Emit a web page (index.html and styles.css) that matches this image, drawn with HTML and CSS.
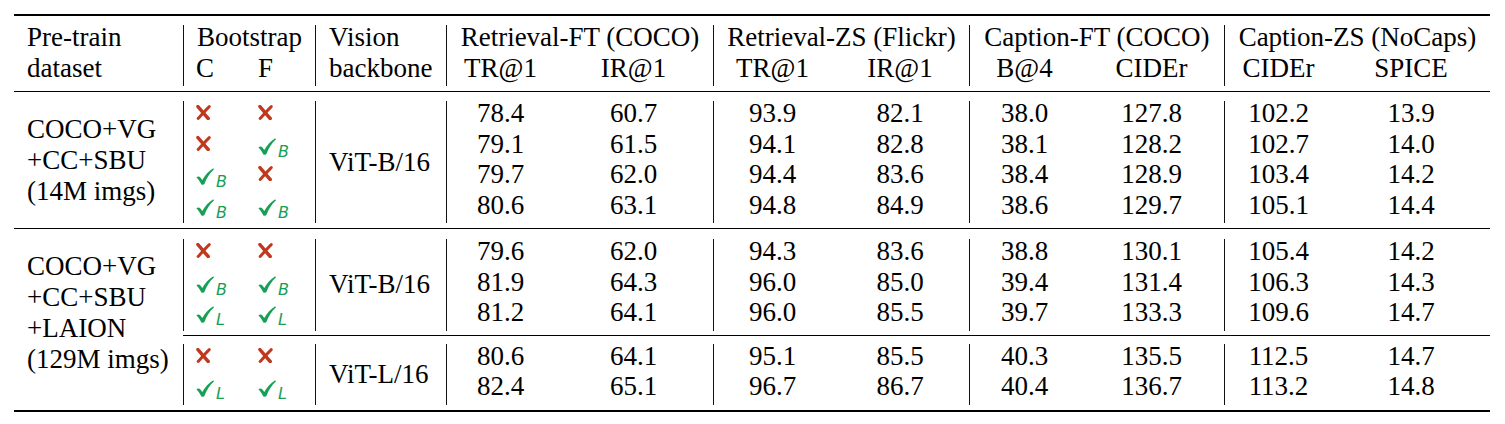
FILE: index.html
```html
<!DOCTYPE html>
<html lang="en">
<head>
<meta charset="utf-8">
<title>Bootstrap ablation table</title>
<link rel="stylesheet" href="styles.css">
</head>
<body>
<svg class="defs" aria-hidden="true">
  <symbol id="x" viewBox="0 0 14 14">
    <path d="M1.8 1.5 C4.6 4.6 7.6 8.4 11.4 12.6" fill="none" stroke="currentColor" stroke-width="3.2" stroke-linecap="round"/>
    <path d="M12.4 1.5 C9 4.8 5.6 8.6 2 12.6" fill="none" stroke="currentColor" stroke-width="2.7" stroke-linecap="round"/>
  </symbol>
  <symbol id="ck" viewBox="0 0 18 17">
    <path d="M0.4 9.4 C1.8 8 3.4 8.3 4.6 9.8 L6.3 12 C8.8 7.4 12.4 3.2 17.3 0.2 L17.9 1.4 C13.9 4.8 10.8 9.6 8.4 16 C7.8 17 5.9 17.1 5.2 16.2 C3.9 13.4 2.3 11 0.4 9.4 Z" fill="currentColor"/>
  </symbol>
</svg>

<div class="tbl">
  <div class="rule thick"></div>

  <div class="head">
    <div class="ds"><div class="ln">Pre-train</div><div class="ln">dataset</div></div>
    <div class="grid">
      <div class="span2 vl">Bootstrap</div>
      <div class="vis vl">Vision</div>
      <div class="span2 vl">Retrieval-FT (COCO)</div>
      <div class="span2 vl">Retrieval-ZS (Flickr)</div>
      <div class="span2 vl">Caption-FT (COCO)</div>
      <div class="span2 vl">Caption-ZS (NoCaps)</div>

      <div class="mk vl">C</div>
      <div class="mk">F</div>
      <div class="vis vl">backbone</div>
      <div class="n vl">TR@1</div>
      <div class="n">IR@1</div>
      <div class="n vl">TR@1</div>
      <div class="n">IR@1</div>
      <div class="n vl">B@4</div>
      <div class="n">CIDEr</div>
      <div class="n vl">CIDEr</div>
      <div class="n">SPICE</div>
    </div>
  </div>

  <div class="rule"></div>

  <div class="group">
    <div class="ds"><div>COCO+VG</div><div>+CC+SBU</div><div>(14M imgs)</div></div>
    <div class="subs">
      <div class="sub s1">
        <div class="grid">
          <div class="mk vl"><svg class="xm"><use href="#x"/></svg></div>
          <div class="mk"><svg class="xm"><use href="#x"/></svg></div>
          <div class="vis vl bb4">ViT-B/16</div>
          <div class="n vl">78.4</div><div class="n">60.7</div>
          <div class="n vl">93.9</div><div class="n">82.1</div>
          <div class="n vl">38.0</div><div class="n">127.8</div>
          <div class="n vl">102.2</div><div class="n">13.9</div>

          <div class="mk vl"><svg class="xm"><use href="#x"/></svg></div>
          <div class="mk"><svg class="cm"><use href="#ck"/></svg><i class="sb">B</i></div>
          <div class="n vl">79.1</div><div class="n">61.5</div>
          <div class="n vl">94.1</div><div class="n">82.8</div>
          <div class="n vl">38.1</div><div class="n">128.2</div>
          <div class="n vl">102.7</div><div class="n">14.0</div>

          <div class="mk vl"><svg class="cm"><use href="#ck"/></svg><i class="sb">B</i></div>
          <div class="mk"><svg class="xm"><use href="#x"/></svg></div>
          <div class="n vl">79.7</div><div class="n">62.0</div>
          <div class="n vl">94.4</div><div class="n">83.6</div>
          <div class="n vl">38.4</div><div class="n">128.9</div>
          <div class="n vl">103.4</div><div class="n">14.2</div>

          <div class="mk vl"><svg class="cm"><use href="#ck"/></svg><i class="sb">B</i></div>
          <div class="mk"><svg class="cm"><use href="#ck"/></svg><i class="sb">B</i></div>
          <div class="n vl">80.6</div><div class="n">63.1</div>
          <div class="n vl">94.8</div><div class="n">84.9</div>
          <div class="n vl">38.6</div><div class="n">129.7</div>
          <div class="n vl">105.1</div><div class="n">14.4</div>
        </div>
      </div>
    </div>
  </div>

  <div class="rule"></div>

  <div class="group g2">
    <div class="ds"><div>COCO+VG</div><div>+CC+SBU</div><div>+LAION</div><div>(129M imgs)</div></div>
    <div class="subs">
      <div class="sub s2a">
        <div class="grid">
          <div class="mk vl"><svg class="xm"><use href="#x"/></svg></div>
          <div class="mk"><svg class="xm"><use href="#x"/></svg></div>
          <div class="vis vl bb3">ViT-B/16</div>
          <div class="n vl">79.6</div><div class="n">62.0</div>
          <div class="n vl">94.3</div><div class="n">83.6</div>
          <div class="n vl">38.8</div><div class="n">130.1</div>
          <div class="n vl">105.4</div><div class="n">14.2</div>

          <div class="mk vl"><svg class="cm"><use href="#ck"/></svg><i class="sb">B</i></div>
          <div class="mk"><svg class="cm"><use href="#ck"/></svg><i class="sb">B</i></div>
          <div class="n vl">81.9</div><div class="n">64.3</div>
          <div class="n vl">96.0</div><div class="n">85.0</div>
          <div class="n vl">39.4</div><div class="n">131.4</div>
          <div class="n vl">106.3</div><div class="n">14.3</div>

          <div class="mk vl"><svg class="cm"><use href="#ck"/></svg><i class="sb">L</i></div>
          <div class="mk"><svg class="cm"><use href="#ck"/></svg><i class="sb">L</i></div>
          <div class="n vl">81.2</div><div class="n">64.1</div>
          <div class="n vl">96.0</div><div class="n">85.5</div>
          <div class="n vl">39.7</div><div class="n">133.3</div>
          <div class="n vl">109.6</div><div class="n">14.7</div>
        </div>
      </div>
      <div class="rule"></div>
      <div class="sub s2b">
        <div class="grid">
          <div class="mk vl"><svg class="xm"><use href="#x"/></svg></div>
          <div class="mk"><svg class="xm"><use href="#x"/></svg></div>
          <div class="vis vl bb2">ViT-L/16</div>
          <div class="n vl">80.6</div><div class="n">64.1</div>
          <div class="n vl">95.1</div><div class="n">85.5</div>
          <div class="n vl">40.3</div><div class="n">135.5</div>
          <div class="n vl">112.5</div><div class="n">14.7</div>

          <div class="mk vl"><svg class="cm"><use href="#ck"/></svg><i class="sb">L</i></div>
          <div class="mk"><svg class="cm"><use href="#ck"/></svg><i class="sb">L</i></div>
          <div class="n vl">82.4</div><div class="n">65.1</div>
          <div class="n vl">96.7</div><div class="n">86.7</div>
          <div class="n vl">40.4</div><div class="n">136.7</div>
          <div class="n vl">113.2</div><div class="n">14.8</div>
        </div>
      </div>
    </div>
  </div>

  <div class="rule thick"></div>
</div>
</body>
</html>
```

FILE: styles.css
```css
html, body {
  margin: 0;
  background: #ffffff;
}

body {
  font-family: "Liberation Serif", "Times New Roman", serif;
  font-size: 27px;
  color: #000;
}

.defs {
  position: absolute;
  width: 0;
  height: 0;
  overflow: hidden;
}

.tbl {
  width: 1476px;
  margin: 14px 0 0 14px;
}

.rule {
  height: 1px;
  background: #000;
}

.rule.thick {
  height: 2px;
}

.head {
  display: flex;
  padding: 9px 0 5px;
}

.ds {
  flex: 0 0 169px;
  box-sizing: border-box;
  padding-left: 13px;
  white-space: nowrap;
}

.head .ds .ln {
  line-height: 24.5px;
  padding-bottom: 6px;
}

.group {
  display: flex;
}

.group .ds {
  display: flex;
  flex-direction: column;
  justify-content: center;
  line-height: 31px;
}

.group.g2 .ds {
  padding-bottom: 13px;
}

.subs {
  flex: 1;
}

.sub.s1 {
  padding: 9px 0 5px;
}

.sub.s2a {
  padding: 10px 0 4px;
}

.sub.s2b {
  padding: 8px 0 5px;
}

.grid {
  display: grid;
  grid-template-columns: 62px 70px 131px 108px 159px 118px 138px 110px 145px 108px 158px;
}

.grid > div {
  line-height: 24.5px;
  padding-bottom: 6px;
  white-space: nowrap;
}

.vl {
  border-left: 1px solid #111;
}

.mk {
  padding-left: 13px;
}

.mk.vl {
  padding-left: 12px;
}

.vis {
  padding-left: 13px;
}

.n {
  text-align: center;
}

.span2 {
  grid-column: span 2;
  text-align: center;
}

.grid > .bb4,
.grid > .bb3,
.grid > .bb2 {
  display: flex;
  align-items: center;
  line-height: 31px;
  padding-bottom: 0;
}

.bb4 { grid-row: span 4; }
.bb3 { grid-row: span 3; }
.bb2 { grid-row: span 2; }

.xm {
  width: 15px;
  height: 15px;
  vertical-align: 2px;
  color: #c0391f;
}

.cm {
  width: 18px;
  height: 17px;
  vertical-align: -2px;
  color: #17a055;
}

.sb {
  font-family: "DejaVu Sans", sans-serif;
  font-style: italic;
  font-size: 16px;
  line-height: 0;
  color: #17a055;
  vertical-align: -4px;
  margin-left: 2px;
}
```
